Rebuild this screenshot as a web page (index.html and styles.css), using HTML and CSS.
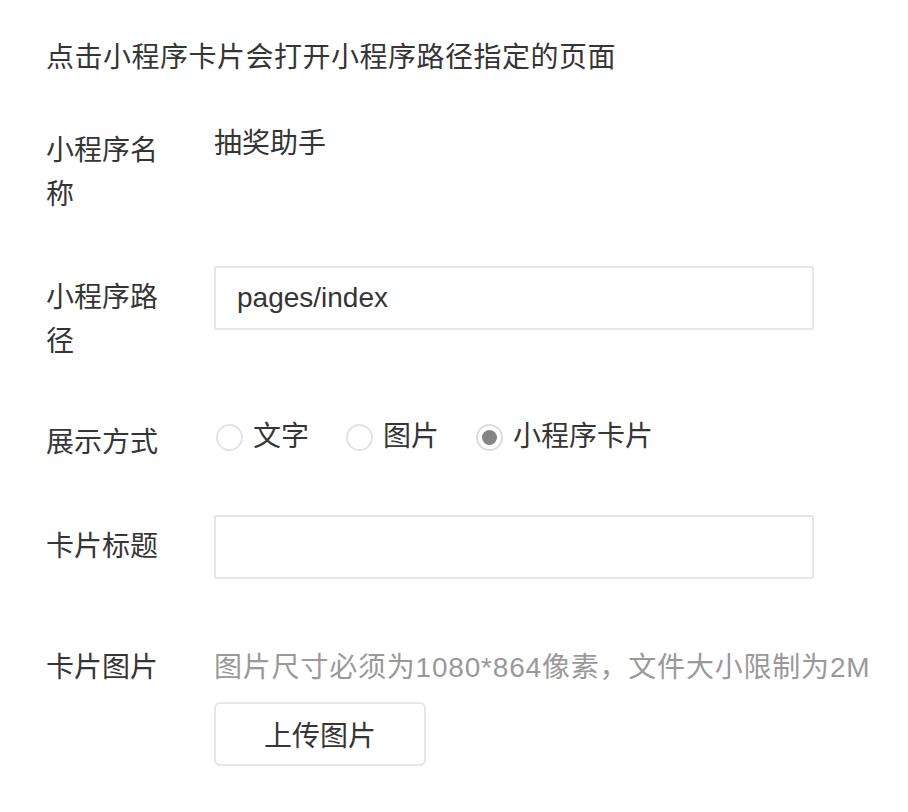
FILE: index.html
```html
<!DOCTYPE html>
<html lang="zh-CN">
<head>
<meta charset="utf-8">
<link rel="stylesheet" href="styles.css">
</head>
<body>
<div class="page">
  <p class="intro">点击小程序卡片会打开小程序路径指定的页面</p>

  <div class="row row-name">
    <div class="label">小程序名称</div>
    <div class="value">抽奖助手</div>
  </div>

  <div class="row row-path">
    <div class="label label-pad">小程序路径</div>
    <div class="field"><input class="input" type="text" value="pages/index"></div>
  </div>

  <div class="row row-mode">
    <div class="label label-pad">展示方式</div>
    <div class="radios">
      <label class="radio"><span class="dot"></span>文字</label>
      <label class="radio"><span class="dot"></span>图片</label>
      <label class="radio"><span class="dot checked"></span>小程序卡片</label>
    </div>
  </div>

  <div class="row row-title">
    <div class="label label-pad">卡片标题</div>
    <div class="field"><input class="input" type="text" value=""></div>
  </div>

  <div class="row row-image">
    <div class="label">卡片图片</div>
    <div class="field">
      <div class="hint">图片尺寸必须为1080*864像素，文件大小限制为2M</div>
      <button class="upload" type="button">上传图片</button>
    </div>
  </div>
</div>
</body>
</html>
```

FILE: styles.css
```css
html, body {
  margin: 0;
  padding: 0;
  background: #ffffff;
}

body {
  font-family: "Liberation Sans", "Noto Sans CJK SC", sans-serif;
  font-size: 28px;
  color: #353535;
}

.page {
  padding: 36px 0 0 46px;
  width: 840px;
}

.intro {
  margin: 0;
  line-height: 44px;
  height: 44px;
  letter-spacing: 0.5px;
}

.row {
  display: flex;
  align-items: flex-start;
}

.row-name { margin-top: 49px; }
.row-path { margin-top: 49px; }
.row-mode { margin-top: 47px; }
.row-title { margin-top: 50px; }
.row-image { margin-top: 67px; }

.label {
  width: 124px;
  flex: none;
  margin-right: 44px;
  line-height: 44px;
  color: #353535;
}

.label-pad {
  padding-top: 10px;
}

.value {
  line-height: 30px;
}

.field {
  flex: 1;
  display: flex;
  flex-direction: column;
  align-items: flex-start;
}

.input {
  box-sizing: border-box;
  width: 600px;
  height: 64px;
  border: 2px solid #e6e6e6;
  border-radius: 2px;
  padding: 0 21px;
  font-family: "Liberation Sans", "Noto Sans CJK SC", sans-serif;
  font-size: 28px;
  color: #353535;
  outline: none;
  background: #fff;
}

.radios {
  display: flex;
  align-items: center;
  padding-top: 4px;
  height: 44px;
}

.radio {
  display: flex;
  align-items: center;
  line-height: 44px;
  margin-right: 35px;
  color: #353535;
}

.dot {
  box-sizing: border-box;
  width: 27px;
  height: 27px;
  margin: 0 10px 0 2px;
  border: 2px solid #e3e3e3;
  border-radius: 50%;
  background: #fff;
  display: flex;
  align-items: center;
  justify-content: center;
}

.dot.checked {
  border-color: #dcdcdc;
}

.dot.checked::after {
  content: "";
  width: 15px;
  height: 15px;
  border-radius: 50%;
  background: #858585;
}

.hint {
  color: #999999;
  line-height: 44px;
  white-space: nowrap;
  letter-spacing: 0.8px;
}

.upload {
  margin-top: 12px;
  box-sizing: border-box;
  width: 212px;
  height: 64px;
  border: 2px solid #e6e6e6;
  border-radius: 6px;
  background: #fff;
  font-family: "Liberation Sans", "Noto Sans CJK SC", sans-serif;
  font-size: 28px;
  color: #353535;
  padding: 0;
}
```
